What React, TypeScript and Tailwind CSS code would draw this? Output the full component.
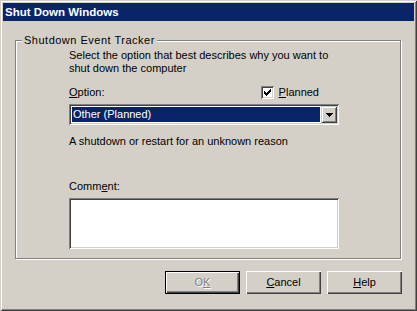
import React from "react";

const checkPixels: [number, number][] = [
  [6, 0],
  [5, 1], [6, 1],
  [0, 2], [4, 2], [5, 2], [6, 2],
  [0, 3], [1, 3], [3, 3], [4, 3], [5, 3],
  [0, 4], [1, 4], [2, 4], [3, 4], [4, 4],
  [1, 5], [2, 5], [3, 5],
  [2, 6],
];

function CheckMark() {
  return (
    <svg width="7" height="7" viewBox="0 0 7 7" shapeRendering="crispEdges">
      {checkPixels.map(([x, y], i) => (
        <rect key={i} x={x} y={y} width="1" height="1" fill="#000" />
      ))}
    </svg>
  );
}

function DownArrow() {
  return (
    <svg width="7" height="4" viewBox="0 0 7 4" shapeRendering="crispEdges">
      <rect x="0" y="0" width="7" height="1" fill="#000" />
      <rect x="1" y="1" width="5" height="1" fill="#000" />
      <rect x="2" y="2" width="3" height="1" fill="#000" />
      <rect x="3" y="3" width="1" height="1" fill="#000" />
    </svg>
  );
}

const sunken =
  "shadow-[inset_1px_1px_#808080,inset_-1px_-1px_#ffffff,inset_2px_2px_#404040,inset_-2px_-2px_#d4d0c8]";
const raised =
  "shadow-[inset_1px_1px_#ffffff,inset_-1px_-1px_#404040,inset_-2px_-2px_#808080]";
const raisedCombo =
  "shadow-[inset_1px_1px_#d4d0c8,inset_-1px_-1px_#404040,inset_2px_2px_#ffffff,inset_-2px_-2px_#808080]";

function Btn({ children, def, disabled }: { children: React.ReactNode; def?: boolean; disabled?: boolean }) {
  return (
    <div
      className={
        "w-[75px] h-[23px] flex items-center justify-center bg-[#d4d0c8] " +
        (def
          ? "shadow-[inset_0_0_0_1px_#000000,inset_2px_2px_#ffffff,inset_-2px_-2px_#404040,inset_-3px_-3px_#808080]"
          : raised)
      }
    >
      <span
        className={
          disabled
            ? "text-[#808080] [text-shadow:1px_1px_0_#ffffff]"
            : "text-black"
        }
      >
        {children}
      </span>
    </div>
  );
}

export default function App() {
  return (
    <div
      className="w-[417px] h-[311px] bg-[#d4d0c8] p-[3px] flex flex-col text-[11px] leading-[13px] text-black shadow-[inset_1px_1px_#d4d0c8,inset_-1px_-1px_#404040,inset_2px_2px_#ffffff,inset_-2px_-2px_#808080]"
      style={{ fontFamily: '"Liberation Sans", Arial, sans-serif' }}
    >
      <div className="h-[18px] bg-[#0a246a] flex items-center pl-[2px]">
        <span className="text-white font-bold text-[11.5px]">Shut Down Windows</span>
      </div>

      <div className="relative ml-[12px] mt-[19px] w-[386px] h-[219px] border border-[#808080] shadow-[1px_1px_0_#ffffff,inset_1px_1px_0_#ffffff] pl-[53px] pt-[8px]">
        <div className="absolute left-[6px] top-[-7px] px-[2px] bg-[#d4d0c8] tracking-[0.5px]">Shutdown Event Tracker</div>

        <div>Select the option that best describes why you want to</div>
        <div>shut down the computer</div>

        <div className="mt-[11px] w-[270px] flex items-center justify-between">
          <span>
            <span className="underline">O</span>ption:
          </span>
          <div className="flex items-center mr-[20px]">
            <div className={"w-[13px] h-[13px] bg-white flex items-center justify-center " + sunken}>
              <CheckMark />
            </div>
            <span className="ml-[5px]">
              <span className="underline">P</span>lanned
            </span>
          </div>
        </div>

        <div className={"mt-[5px] w-[270px] h-[21px] bg-white p-[2px] flex " + sunken}>
          <div className="flex-1 p-[1px] flex">
            <div className="flex-1 bg-[#0a246a] text-white flex items-center pl-[1px]">Other (Planned)</div>
          </div>
          <div className={"w-[16px] h-[17px] bg-[#d4d0c8] flex items-center justify-center " + raisedCombo}>
            <DownArrow />
          </div>
        </div>

        <div className="mt-[10px]">A shutdown or restart for an unknown reason</div>

        <div className="mt-[32px]">
          Comm<span className="underline">e</span>nt:
        </div>

        <div className={"mt-[5px] w-[270px] h-[51px] bg-white " + sunken}></div>
      </div>

      <div className="mt-[12px] flex justify-end gap-[6px] pr-[12px]">
        <Btn def disabled>
          O<span className="underline">K</span>
        </Btn>
        <Btn>
          <span className="underline">C</span>ancel
        </Btn>
        <Btn>
          <span className="underline">H</span>elp
        </Btn>
      </div>
    </div>
  );
}
